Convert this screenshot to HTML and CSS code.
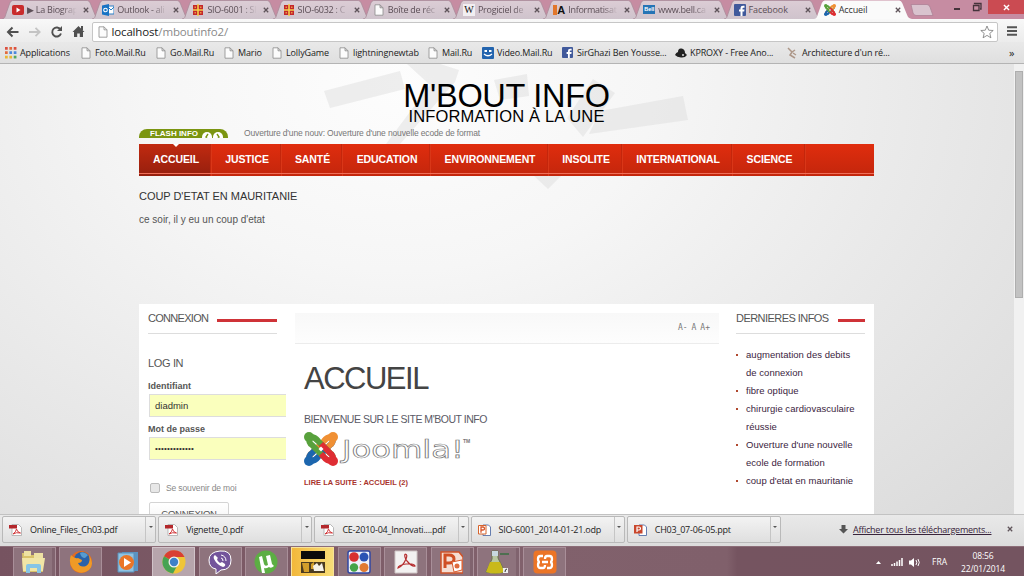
FILE: index.html
```html
<!DOCTYPE html>
<html lang="fr">
<head>
<meta charset="utf-8">
<title>Accueil</title>
<link rel="stylesheet" href="styles.css">
</head>
<body>
<svg class="defs" width="0" height="0">
  <defs>
    <linearGradient id="tabfill" x1="0" y1="0" x2="0" y2="1"><stop offset="0" stop-color="#dccdd5"/><stop offset="1" stop-color="#cfc3cc"/></linearGradient>
    <symbol id="tab" viewBox="0 0 100 19" preserveAspectRatio="none"><path d="M0 19C3 18.500 3 17 4 14L8 3Q9 .5 11 .5H87Q89 .5 90 3L95 15Q96 18.500 100 19" fill="url(#tabfill)" stroke="#a98b9a" stroke-width=".8"/></symbol>
    <symbol id="tabon" viewBox="0 0 100 19" preserveAspectRatio="none"><path d="M0 19C3 18.500 3 17 4 14L8 3Q9 .5 11 .5H87Q89 .5 90 3L95 15Q96 18.500 100 19" fill="#fafafa"/></symbol>
    <symbol id="page" viewBox="0 0 10 12"><path d="M1 .8H6L9 3.800V11.200H1ZM6 .8V3.800H9" fill="#fcfcfc" stroke="#8c8c8c" stroke-width=".8"/></symbol>
    <symbol id="close" viewBox="0 0 6 6"><path d="M.8 .8 5.200 5.200M5.200 .8 .8 5.200" stroke="#5f545a" stroke-width="1.300"/></symbol>
    <symbol id="yt" viewBox="0 0 12 10"><rect width="12" height="10" rx="2" fill="#c92b2c"/><path d="M4.500 2.600 8.500 5 4.500 7.400Z" fill="#fff"/></symbol>
    <symbol id="outlook" viewBox="0 0 12 12"><path d="M6 2H12V10H6Z" fill="#fff" stroke="#2b7fc6"/><path d="M6 3 9 6 12 3" fill="none" stroke="#2b7fc6"/><path d="M0 1.500 7 0V12L0 10.500Z" fill="#1873c4"/><circle cx="3.500" cy="6" r="1.800" fill="none" stroke="#fff" stroke-width="1.100"/></symbol>
    <symbol id="gift" viewBox="0 0 10 12"><path d="M0 1H10V11H0Z" fill="#c4262b"/><path d="M4.200 0H5.800V12H4.200ZM0 5.200H10V6.800H0Z" fill="#f3cf4e"/><path d="M1.500 2.500H3V4H1.500ZM7 2.500H8.500V4H7ZM1.500 8H3V9.500H1.500ZM7 8H8.500V9.500H7Z" fill="#e79a45"/></symbol>
    <symbol id="fb" viewBox="0 0 12 12"><rect width="12" height="12" rx="1" fill="#40599b"/><path d="M6.500 12V7.500H5V5.500H6.500V4Q6.500 1.800 9 1.800H10.500V3.700H9.300Q8.500 3.700 8.500 4.500V5.500H10.500L10.200 7.500H8.500V12Z" fill="#fff"/></symbol>
    <symbol id="joomla" viewBox="0 0 34 34">
      <g fill="none" stroke-width="6" stroke-linejoin="round">
        <path d="M29 5Q29.500 11 26 13L14 25Q11 29.500 5 29" stroke="#1c66ae"/>
        <path d="M29 5Q29.500 11 26 13L22 17" stroke="#f09034"/>
        <path d="M5 29Q4.500 23 8 21L20 9Q23 4.500 29 5" stroke="#f09034"/>
        <path d="M5 29Q4.500 23 8 21L12 17" stroke="#1c66ae"/>
        <path d="M5 5Q4.500 11 8 13L20 25" stroke="#58a13c"/>
        <path d="M29 29Q29.500 23 26 21L14 9Q11 4.500 5 5" stroke="#58a13c"/>
        <path d="M29 29Q29.500 23 26 21L17 12M29 29Q23 29.500 20 25L17 22" stroke="#df2d33"/>
      </g>
      <path d="M17 14.500 19.500 17 17 19.500 14.500 17Z" fill="#fff"/>
      <circle cx="5" cy="5" r="5" fill="#58a13c"/><circle cx="29" cy="5" r="5" fill="#f09034"/><circle cx="29" cy="29" r="5" fill="#df2d33"/><circle cx="5" cy="29" r="5" fill="#1c66ae"/>
    </symbol>
    <symbol id="pdf" viewBox="0 0 13 12"><path d="M3 .5H9.500L12.500 3.500V11.500H3Z" fill="#fff" stroke="#aaa" stroke-width=".8"/><path d="M0 1H8V4.500H0Z" fill="#b3272b"/><path d="M4 10Q7 8 7.500 5Q8 8 11.500 9Q7 8 4 10" fill="none" stroke="#d2373a"/></symbol>
    <symbol id="odp" viewBox="0 0 13 12"><path d="M5 1H10.500L12.500 3V11.500H5Z" fill="#fff" stroke="#5671a8" stroke-width=".9"/><path d="M.5 1.500H8V10H.5Z" fill="#fff" stroke="#d7642c"/><path d="M3 8.800V3H5Q6.500 3 6.500 4.500T5 6H3" fill="none" stroke="#d7562a" stroke-width="1.300"/></symbol>
    <symbol id="ppt" viewBox="0 0 13 12"><path d="M5 1H10.500L12.500 3V11.500H5Z" fill="#fff" stroke="#5671a8" stroke-width=".9"/><path d="M0 1H8.500V9.500H0Z" fill="#c9472c"/><path d="M3 8V3H5Q6.500 3 6.500 4.500T5 6H3" fill="none" stroke="#fff" stroke-width="1.200"/></symbol>
  </defs>
</svg>

<div class="screen">
  <header class="tabstrip">
    <div class="tab"><svg class="shape"><use href="#tab"/></svg><svg class="ico"><use href="#yt"/></svg><span class="label">▶ La Biograp</span><svg class="x"><use href="#close"/></svg></div>
    <div class="tab"><svg class="shape"><use href="#tab"/></svg><svg class="ico"><use href="#outlook"/></svg><span class="label">Outlook - ali</span><svg class="x"><use href="#close"/></svg></div>
    <div class="tab"><svg class="shape"><use href="#tab"/></svg><svg class="ico"><use href="#gift"/></svg><span class="label">SIO-6001 : SI</span><svg class="x"><use href="#close"/></svg></div>
    <div class="tab"><svg class="shape"><use href="#tab"/></svg><svg class="ico"><use href="#gift"/></svg><span class="label">SIO-6032 : C</span><svg class="x"><use href="#close"/></svg></div>
    <div class="tab"><svg class="shape"><use href="#tab"/></svg><svg class="ico"><use href="#page"/></svg><span class="label">Boîte de réc</span><svg class="x"><use href="#close"/></svg></div>
    <div class="tab"><svg class="shape"><use href="#tab"/></svg><span class="ico wiki">W</span><span class="label">Progiciel de</span><svg class="x"><use href="#close"/></svg></div>
    <div class="tab"><svg class="shape"><use href="#tab"/></svg><span class="ico info"><i></i>A</span><span class="label">Informatisat</span><svg class="x"><use href="#close"/></svg></div>
    <div class="tab"><svg class="shape"><use href="#tab"/></svg><span class="ico bell">Bell</span><span class="label">www.bell.ca</span><svg class="x"><use href="#close"/></svg></div>
    <div class="tab"><svg class="shape"><use href="#tab"/></svg><svg class="ico"><use href="#fb"/></svg><span class="label solid">Facebook</span><svg class="x"><use href="#close"/></svg></div>
    <div class="tab active"><svg class="shape"><use href="#tabon"/></svg><svg class="ico"><use href="#joomla"/></svg><span class="label solid">Accueil</span><svg class="x"><use href="#close"/></svg></div>
    <svg class="newtab" viewBox="0 0 24 12"><path d="M1 .5H17Q19 .5 20 3L23 11.500H6Q4 11.500 3 9Z" fill="#d9c3ce" stroke="#ad8296" stroke-width=".8"/></svg>
    <div class="winctl">
      <svg width="60" height="19"><path d="M1 9H7" stroke="#45333b" stroke-width="2"/><path d="M20.500 5.500H26V10.500H20.500ZM21.500 4V3.500H28V9H27" fill="none" stroke="#45333b" stroke-width="1.300"/></svg>
      <div class="winclose"><svg width="7" height="7" viewBox="0 0 6 6"><path d="M.8 .8 5.200 5.200M5.200 .8 .8 5.200" stroke="#fff" stroke-width="1.200"/></svg></div>
    </div>
  </header>

  <div class="toolbar">
    <svg class="navicons" viewBox="0 0 92 23">
      <path d="M18.500 13H9M12.500 8.500 8 13 12.500 17.500" fill="none" stroke="#505050" stroke-width="2"/>
      <path d="M29 13H39M35.500 8.800 39.700 13 35.500 17.200" fill="none" stroke="#c4c4c4" stroke-width="1.800"/>
      <path d="M60.500 10.500A4.500 4.500 0 1 0 61 14.500" fill="none" stroke="#505050" stroke-width="1.900"/><path d="M62 7V12H57Z" fill="#505050"/>
      <path d="M72.500 13 78.500 7 84.500 13H83V18H79.800V14.500H77.200V18H74V13ZM81 7H83V11H81Z" fill="#505050"/>
    </svg>
    <div class="omnibox"><svg class="pg"><use href="#page"/></svg><span class="url"><b>localhost</b>/mboutinfo2/</span>
      <svg class="star" viewBox="0 0 14 14"><path d="M7 1 8.700 5.200 13.200 5.500 9.800 8.400 10.900 12.800 7 10.400 3.100 12.800 4.200 8.400 .8 5.500 5.300 5.200Z" fill="#fff" stroke="#777" stroke-width=".8"/></svg></div>
    <svg class="menu" viewBox="0 0 11 10"><path d="M0 1.200H10M0 5H10M0 8.800H10" stroke="#555" stroke-width="2"/></svg>
  </div>

  <nav class="bookmarks">
    <a><svg class="bi" viewBox="0 0 11 11"><path d="M0 0h2.500v2.500H0zM8 0h2.500v2.500H8z" fill="#dc5040"/><path d="M4 0h2.500v2.500H4zM0 4h2.500v2.500H0z" fill="#e26b3e"/><path d="M4 4h2.500v2.500H4zM8 4h2.500v2.500H8z" fill="#4b88dc"/><path d="M0 8h2.500v2.500H0zM4 8h2.500v2.500H4z" fill="#e8b734"/><path d="M8 8h2.500v2.500H8z" fill="#53a85b"/></svg>Applications</a>
    <a><svg class="bi"><use href="#page"/></svg>Foto.Mail.Ru</a>
    <a><svg class="bi"><use href="#page"/></svg>Go.Mail.Ru</a>
    <a><svg class="bi"><use href="#page"/></svg>Mario</a>
    <a><svg class="bi"><use href="#page"/></svg>LollyGame</a>
    <a><svg class="bi"><use href="#page"/></svg>lightningnewtab</a>
    <a><svg class="bi"><use href="#page"/></svg>Mail.Ru</a>
    <a><svg class="bi" viewBox="0 0 12 12"><rect width="12" height="12" rx="1" fill="#2364ae"/><path d="M2.500 3H5V5H2.500ZM7 3H9.500V5H7Z" fill="#fff"/><path d="M2 7Q6 10.500 10 7" fill="none" stroke="#fff" stroke-width="1.300"/></svg>Video.Mail.Ru</a>
    <a><svg class="bi" viewBox="0 0 12 12"><use href="#fb" width="11" height="11"/></svg>SirGhazi Ben Yousse...</a>
    <a><svg class="bi" viewBox="0 0 12 12"><path d="M3 5Q3 1 6.500 1.500T10 6L12 8Q10 11 6 10.500T0 8Q1 5.500 3 5" fill="#222"/><circle cx="8" cy="8" r="1" fill="#ddd"/></svg>KPROXY - Free Ano...</a>
    <a><svg class="bi" viewBox="0 0 12 12"><path d="M1 1 5 5 8 3M5 5 3 8 8 11M6 6 9 8" fill="none" stroke="#ad9788" stroke-width="1.500"/></svg>Architecture d'un ré...</a>
    <a class="more">»</a>
  </nav>

  <main class="viewport">
    <svg class="shapes" width="1014" height="450" viewBox="0 64 1014 450">
      <g fill="#dadada" fill-opacity=".42">
        <path d="M324 91 400 71 405 89 330 108Z"/>
        <path d="M407 64H440L459 70 455 82 400 144H386L430 85Z"/>
        <path d="M494 80 527 74 529 96 500 100Z"/>
        <path d="M593 79 615 93 583 137 567 118Z"/>
        <path d="M600 111 683 96 688 120 589 134Z"/>
        <path d="M534 176H561L548 189Z"/>
      </g>
    </svg>
    <div class="site">
      <div class="brand"><div class="name">M'BOUT INFO</div><div class="tag">INFORMATION À LA UNE</div></div>
      <div class="flash">
        <div class="pill"><span>FLASH INFO</span><svg width="24" height="9" viewBox="0 0 24 9"><circle cx="6" cy="8" r="5" fill="#fff"/><circle cx="17" cy="8" r="5" fill="#fff"/><path d="M7 5 5 8 7 11M16 5 18 8 16 11" fill="none" stroke="#7b9511" stroke-width="1.400"/></svg></div>
        <span class="ticker">Ouverture d'une nouv: Ouverture d'une nouvelle ecode de format</span>
      </div>
      <nav class="mainnav">
        <a class="on">ACCUEIL</a><a>JUSTICE</a><a>SANTÉ</a><a>EDUCATION</a><a>ENVIRONNEMENT</a><a>INSOLITE</a><a>INTERNATIONAL</a><a>SCIENCE</a><span></span>
      </nav>
      <section class="headline"><h3>COUP D'ETAT EN MAURITANIE</h3><p>ce soir, il y eu un coup d'etat</p></section>
      <div class="content">
        <aside class="left">
          <div class="modhead"><h3>CONNEXION</h3><i></i></div>
          <h3 class="login">LOG IN</h3>
          <label>Identifiant</label>
          <div class="field">diadmin</div>
          <label>Mot de passe</label>
          <div class="field pw">•••••••••••••</div>
          <div class="remember"><i></i>Se souvenir de moi</div>
          <div class="btn">CONNEXION</div>
        </aside>
        <article class="mid">
          <div class="tools"><span>A-</span><span>A</span><span>A+</span></div>
          <h1>ACCUEIL</h1>
          <h2>BIENVENUE SUR LE SITE M'BOUT INFO</h2>
          <div class="logo"><svg width="34" height="34"><use href="#joomla"/></svg>
            <svg width="134" height="34"><text x="4" y="26" textLength="122" lengthAdjust="spacingAndGlyphs" class="wordmark">Joomla!</text><text x="125" y="11" class="tm">TM</text></svg></div>
          <div class="readmore">LIRE LA SUITE : ACCUEIL (2)</div>
        </article>
        <aside class="right">
          <div class="modhead"><h3>DERNIERES INFOS</h3><i></i></div>
          <ul>
            <li>augmentation des debits<br>de connexion</li>
            <li>fibre optique</li>
            <li>chirurgie cardiovasculaire<br>réussie</li>
            <li>Ouverture d'une nouvelle<br>ecole de formation</li>
            <li>coup d'etat en mauritanie</li>
          </ul>
        </aside>
      </div>
    </div>
    <div class="scroll"><div class="thumb"></div></div>
  </main>

  <div class="downloads">
    <div class="dl"><svg><use href="#pdf"/></svg><span>Online_Files_Ch03.pdf</span><i></i></div>
    <div class="dl"><svg><use href="#pdf"/></svg><span>Vignette_0.pdf</span><i></i></div>
    <div class="dl"><svg><use href="#pdf"/></svg><span>CE-2010-04_Innovati....pdf</span><i></i></div>
    <div class="dl"><svg><use href="#odp"/></svg><span>SIO-6001_2014-01-21.odp</span><i></i></div>
    <div class="dl"><svg><use href="#ppt"/></svg><span>CH03_07-06-05.ppt</span><i></i></div>
    <div class="all"><svg width="9" height="9" viewBox="0 0 9 9"><path d="M2.500 0H6.500V4H9L4.500 8.500 0 4H2.500Z" fill="#555"/></svg><a>Afficher tous les téléchargements...</a></div>
    <svg class="dlx"><use href="#close"/></svg>
  </div>

  <footer class="taskbar">
    <div class="apps">
      <div class="app stack"><svg viewBox="0 0 24 24"><path d="M1 3H8L10 5H22V22H2Z" fill="#d9c26b"/><path d="M3 1H10V6H3ZM13 3H22V8H13Z" fill="#eee2a3"/><path d="M1 8H24L22 21H2Z" fill="#f1e5a6"/><path d="M5 23V16Q5 14 7 14H18Q20 14 20 16V23H16V18H9V23Z" fill="#86c5e6"/></svg></div>
      <div class="app"><svg viewBox="0 0 24 24"><circle cx="12" cy="12" r="11" fill="#e36b20"/><circle cx="13" cy="10" r="8" fill="#2a62a8"/><path d="M2 5Q5 9 9 8L13 10Q13 13 9 13 11 18 17 16 22 13 20 5 26 14 20 20 12 26 4 19 -1 13 2 5" fill="#ef9a27"/><path d="M11 3Q15 1 19 5L16 8Q12 8 11 3" fill="#579bd0"/></svg></div>
      <div class="app plain"><svg viewBox="0 0 24 24"><path d="M7 2H23V21H9Z" fill="#5b93c2"/><path d="M3 3H19V22H3Z" fill="#8fc2e2" stroke="#5b91bb"/><circle cx="11.500" cy="12.500" r="7.500" fill="#ea7527"/><path d="M9 8 16 12.500 9 17Z" fill="#fff"/></svg></div>
      <div class="app lit"><svg viewBox="0 0 24 24"><circle cx="12" cy="12" r="11.500" fill="#efc537"/><path d="M12 12 2 6.200A11.500 11.500 0 0 1 22.500 7H12Z" fill="#d93f32"/><path d="M12 12 2 6.200A11.500 11.500 0 0 0 11 23.500L16 14Z" fill="#47a353"/><circle cx="12" cy="12" r="5.500" fill="#f3f1ec"/><circle cx="12" cy="12" r="4.200" fill="#3d80c8"/></svg></div>
      <div class="app"><svg viewBox="0 0 24 24"><path d="M12 1Q23 0 23 10T13 20L8 24V19Q1 18 1 10T12 1" fill="#73549b" stroke="#fff"/><path d="M7 5Q5 6 6 9 9 15 15 17 18 16 17 14L14 12 12 13Q9 11 9 9L10 8Z" fill="#fff"/><path d="M13 5Q18 6 18 11M13 8Q15 8 15 11" fill="none" stroke="#fff"/></svg></div>
      <div class="app"><svg viewBox="0 0 24 24"><circle cx="12" cy="12" r="11.500" fill="#5cae43"/><path d="M5 7 8 6 10 14Q11 17 14 15L12 6 16 5 18 14 20 16Q17 19 15 17 12 19 10 18L11 23H8Z" fill="#fff"/></svg></div>
      <div class="app hot"><svg viewBox="0 0 24 24"><path d="M0 1H24V9H0Z" fill="#0b0b0b"/><path d="M0 12H24V23H0Z" fill="#4c3c20"/><path d="M1 13H8V22H3ZM10 14 13 12V19H10Z" fill="#d29e2b"/><path d="M12 16 16 13 18 16 21 13 23 21H13Z" fill="#f5f2e9"/></svg></div>
      <div class="app"><svg viewBox="0 0 24 24"><rect x="1" y="1" width="22" height="22" rx="2" fill="#eef1fa" stroke="#3147a2" stroke-width="1.500"/><circle cx="7" cy="7" r="4.800" fill="#d83032"/><circle cx="17" cy="7" r="4.500" fill="#2a52b4"/><circle cx="7" cy="17.500" r="4.200" fill="#45a449"/><circle cx="17" cy="17.500" r="4.500" fill="#e07a32"/></svg></div>
      <div class="app"><svg viewBox="0 0 24 24"><path d="M1 1H23V23H1Z" fill="#f3f1f1" stroke="#cfc5c5"/><path d="M11 4Q14 4 12 9 9 16 4 18 4 15 12 14 20 13 21 16 18 17 13 11 10 7 11 4" fill="none" stroke="#b52c2e" stroke-width="1.200"/></svg></div>
      <div class="app stack"><svg viewBox="0 0 24 24"><path d="M2 2H20L24 7V23H2Z" fill="#f5ded3" stroke="#cf5329" stroke-width="1.500"/><path d="M6 18V5H10Q15 5 15 9T10 13H6" fill="none" stroke="#d04f24" stroke-width="3"/><path d="M13 12 23 10V20L15 22Z" fill="#fff" stroke="#d85a2d"/><circle cx="18" cy="16" r="2.500" fill="#df6b3d"/></svg></div>
      <div class="app stack"><svg viewBox="0 0 24 24"><path d="M7 1H13V8L20 22Q10 25 1 22L7 9Z" fill="#b9c7a0" stroke="#68724e"/><path d="M5 12H15L19 22Q10 25 1 22Z" fill="#c9b91a"/><path d="M7 1H13V6H7Z" fill="#c8d8df"/><path d="M15 4H24" stroke="#4e6f50" stroke-width="2"/><path d="M18 18H23V23H18Z" fill="#eee"/><path d="M20 22Q20 19 22 19" fill="none" stroke="#333"/></svg></div>
      <div class="app"><svg viewBox="0 0 24 24"><rect x=".5" y=".5" width="23" height="23" rx="4" fill="#ec7526"/><path d="M10 6H7.500Q5 6 5 9T7 12Q5 12 5 15T7.500 18H10Q12 18 12 15M14 18H16.500Q19 18 19 15T17 12Q19 12 19 9T16.500 6H14Q12 6 12 9M9 12H15" fill="none" stroke="#fff" stroke-width="2.300"/></svg></div>
    </div>
    <div class="tray">
      <svg width="50" height="14" viewBox="0 0 50 14"><path d="M0 9 2.500 6 5 9Z" fill="#fff"/><path d="M16 11V9M18.500 11V8M21 11V6.500M23.500 11V5M26 11V3" stroke="#fff" stroke-width="1.500"/><path d="M33 5.500H35L38 3V12L35 9.500H33Z" fill="#fff"/><path d="M40 5Q41.500 7.500 40 10M42 4Q44.500 7.500 42 11" fill="none" stroke="#fff"/></svg>
      <span class="lang">FRA</span>
      <div class="clock">08:56<br>22/01/2014</div>
    </div>
  </footer>
</div>
</body>
</html>
```
FILE: styles.css
```css
* { box-sizing: border-box; }
body { margin: 0; overflow: hidden; }
.defs { position: absolute; }
h1, h2, h3, p, ul { margin: 0; padding: 0; font-weight: normal; }
.screen { width: 1024px; height: 576px; display: flex; flex-direction: column; overflow: hidden; font-family: "Open Sans", "Noto Sans", sans-serif; font-size: 9px; color: #222; }
.screen > * { flex: none; }

.tabstrip { height: 19px; background: #c68ca2; display: flex; padding-left: 2px; }
.tab { position: relative; width: 90.2px; height: 19px; display: flex; align-items: center; padding-left: 10px; white-space: nowrap; color: #5c4f57; }
.shape { position: absolute; left: 0; top: 0; width: 98px; height: 19px; }
.tab .ico { position: relative; width: 12px; height: 12px; margin-right: 3px; flex: none; }
.tab .label { position: relative; width: 54px; margin-right: 2px; letter-spacing: -.25px; -webkit-mask-image: linear-gradient(90deg, #000 65%, transparent 92%); mask-image: linear-gradient(90deg, #000 65%, transparent 92%); }
.tab .x { position: relative; width: 6px; height: 6px; flex: none; }
.tab.active { color: #333; }
.tab .label.solid { -webkit-mask-image: none; mask-image: none; letter-spacing: -.1px; }
.wiki { background: #f2eef1; font: 10px/12px "Liberation Serif", serif; text-align: center; color: #111; }
.info { display: flex; font: bold 11px/12px "Liberation Sans", sans-serif; color: #111; }
.info i { width: 4px; height: 10px; background: #e2762b; margin-top: 1px; }
.tab .bell { height: 9px; background: #2674b5; color: #fff; font: bold 5.5px/9px "Liberation Sans", sans-serif; text-align: center; }
.newtab { width: 24px; height: 12px; margin: 4px 0 0 6px; flex: none; }
.winctl { display: flex; margin-left: auto; width: 71px; }
.winctl > svg { width: 35px; flex: none; }
.winclose { width: 36px; height: 14px; background: #cb4b52; display: flex; align-items: center; justify-content: center; }

.toolbar { height: 23px; background: linear-gradient(#f8f8f8, #ececec); display: flex; align-items: center; }
.navicons { width: 92px; height: 23px; flex: none; }
.omnibox { width: 906px; height: 20px; margin-top: 2px; background: #fff; border: 1px solid #c6c6c6; border-radius: 2px; display: flex; align-items: center; padding: 0 3px 0 5px; }
.pg { width: 10px; height: 12px; }
.url { margin-left: 3.5px; font-size: 11.5px; letter-spacing: -.15px; color: #8a8a8a; }
.url b { font-weight: normal; color: #222; }
.star { width: 14px; height: 14px; margin-left: auto; }
.menu { width: 11px; height: 10px; margin-left: 9px; }

.bookmarks { height: 22px; background: linear-gradient(#e9e9e9, #dfdfdf); border-bottom: 1px solid #b4b4b4; padding-left: 5px; display: grid; grid-template-columns: 75px 75px 68px 48px 67px 89px 55px 80px 113px 112px 222px 1fr; align-items: center; letter-spacing: -.12px; }
.bookmarks a { display: flex; align-items: center; white-space: nowrap; gap: 3px; }
.bi { width: 12px; height: 12px; flex: none; }
.more { font-size: 11px; }

.viewport { position: relative; height: 450px; overflow: hidden; display: flex; justify-content: space-between; padding-left: 139px; background: radial-gradient(ellipse 850px 620px at 400px 20px, #fdfdfd 0%, #f6f6f6 30%, #e9e9e9 62%, #dadada 100%); font-family: "Liberation Sans", Arial, sans-serif; }
.shapes { position: absolute; left: 0; top: 0; }
.site { position: relative; width: 735px; height: 450px; }
.brand { height: 64px; text-align: center; color: #000; padding-top: 19px; }
.name { font-size: 32.5px; line-height: 26px; height: 24px; letter-spacing: -.3px; }
.tag { font-size: 16.5px; line-height: 18px; letter-spacing: .15px; }
.flash { height: 16px; display: flex; }
.pill { width: 89px; height: 9px; margin-top: 1px; background: #7b9511; border-radius: 8px 8px 0 0; overflow: hidden; display: flex; justify-content: space-between; padding: 0 3px 0 11px; color: #fff; font: bold 8px/9px "Liberation Sans", sans-serif; white-space: nowrap; }
.ticker { margin-left: 16px; font-size: 8.5px; line-height: 11px; color: #777; letter-spacing: -.14px; }
.mainnav { position: relative; height: 32px; display: grid; grid-template-columns: 72px 70px 61px 88px 118px 74px 110px 73px 1fr; background: linear-gradient(#e02d0e, #c3260c); color: #fff; font: bold 10.5px/31px "Liberation Sans", sans-serif; letter-spacing: -.1px; }
.mainnav::after { content: ""; position: absolute; left: 0; right: 0; bottom: 2px; height: 1px; background: #f0705a; }
.mainnav a { text-align: center; padding-left: 3px; border-right: 1px solid #c4260c; box-shadow: 1px 0 #d93718; white-space: nowrap; }
.mainnav .on { position: relative; background: linear-gradient(#c12a10, #951f0e); }
.on::before { content: ""; position: absolute; left: 34px; top: 0; border: solid transparent; border-width: 3px 3px 0; border-top-color: #fff; }
.headline { height: 128px; padding-top: 13px; }
.headline h3 { font-size: 11px; line-height: 14px; color: #333; white-space: nowrap; letter-spacing: -.04px; }
.headline p { margin-top: 10px; font-size: 10px; line-height: 14px; color: #555; }
.content { height: 210px; background: #fff; display: flex; overflow: hidden; }
.left { width: 147px; padding: 0 0 0 9px; }
.modhead { display: flex; height: 30px; border-bottom: 1px solid #ddd; padding-top: 8px; }
.modhead h3 { font-size: 11px; line-height: 13px; color: #555; white-space: nowrap; letter-spacing: -.7px; }
.modhead i { flex: 1; height: 3px; background: #cf3338; margin: 7px 0 0 9px; }
.left .modhead { width: 129px; }
.right .modhead h3 { letter-spacing: -.55px; }
.login { font-size: 11px; line-height: 14px; margin: 22px 0 9px; color: #555; letter-spacing: -.35px; }
label { display: block; font: bold 9px/14px "Liberation Sans", sans-serif; color: #555; }
.field { height: 23px; margin: 1px 0 5px 1px; background: #faffbd; border: 1px solid #ddd; border-right: 0; font-size: 9.5px; line-height: 21px; padding-left: 5px; color: #333; }
.pw { font-size: 8px; letter-spacing: .2px; }
.remember { display: flex; align-items: center; margin: 21px 0 0 2px; height: 14px; font-size: 8.5px; color: #888; gap: 6px; letter-spacing: -.13px; }
.remember i { width: 10px; height: 10px; border: 1px solid #bbb; border-radius: 2px; background: #e7e7e7; }
.btn { margin: 7px 0 0 1px; width: 80px; height: 26px; border: 1px solid #d4d4d4; border-radius: 2px; text-align: center; font-size: 9.5px; line-height: 22px; color: #555; background: linear-gradient(#fff, #f2f2f2); letter-spacing: -.25px; }
.mid { width: 433px; padding: 9px 0 0 9px; }
.tools { height: 31px; background: linear-gradient(#f8f8f8, #fdfdfd); border-bottom: 1px solid #ececec; display: flex; justify-content: flex-end; gap: 4px; padding-right: 9px; font: 8px/29px "DejaVu Sans Mono", monospace; color: #777; width: 424px; }
h1 { font-size: 31px; line-height: 36px; margin: 17px 0 0 9px; color: #444; letter-spacing: -1.5px; }
h2 { font-size: 10.5px; line-height: 14px; margin: 15px 0 0 9px; color: #5a5a66; white-space: nowrap; letter-spacing: -.47px; }
.logo { display: flex; height: 34px; margin: 6px 0 0 9px; }
.wordmark { font: 24px "DejaVu Sans", sans-serif; fill: #fff; stroke: #777; stroke-width: .7px; }
.tm { font: bold 5px "Liberation Sans", sans-serif; fill: #777; }
.readmore { margin: 11px 0 0 9px; font: bold 7.5px/12px "Liberation Sans", sans-serif; color: #a8332c; }
.right { width: 146px; padding-left: 17px; }
.right .modhead { width: 129px; }
.right ul { list-style: none; margin-top: 12px; font-size: 9.5px; line-height: 18px; color: #3b2440; letter-spacing: .03px; }
.right li { position: relative; padding-left: 10px; white-space: nowrap; }
.right li::before { content: ""; position: absolute; left: 0; top: 8px; width: 2px; height: 2px; background: #b0492f; }
.scroll { width: 10px; background: #f1f1f1; padding: 7px 1px 0; position: relative; }
.thumb { height: 227px; background: #c2c2c2; border: 1px solid #aeaeae; }

.downloads { height: 32px; border-top: 1px solid #c2c2c2; background: linear-gradient(#e9e9e9, #dcdcdc); display: flex; gap: 2px; padding: 1px 0 3px 2px; }
.dl { display: flex; align-items: center; width: 154.2px; height: 27px; flex: none; border: 1px solid #b9b9b9; border-radius: 2px; background: linear-gradient(#f3f3f3, #dfdfdf); white-space: nowrap; letter-spacing: -.22px; }
.dl svg { width: 13px; height: 12px; margin: 0 8px 0 6px; flex: none; }
.dl i { margin-left: auto; width: 10px; height: 25px; border-left: 1px solid #c5c5c5; display: flex; justify-content: center; padding-top: 9px; }
.dl i::before { content: ""; width: 0; height: 0; border: 2px solid transparent; border-top-color: #555; }
.all { margin-left: 56px; display: flex; align-items: center; gap: 5px; white-space: nowrap; flex: none; letter-spacing: -.24px; }
.all a { text-decoration: underline; width: 140px; color: #38233a; }
.dlx { width: 6px; height: 6px; margin: 10px 0 0 12px; flex: none; }

.taskbar { height: 30px; background: linear-gradient(90deg, #765360, #81616c 50%, #80606b 71%, #755460 72%, #745460); border-top: 1px solid #8c6d78; display: flex; justify-content: space-between; }
.apps { display: flex; gap: 3.4px; padding-left: 13px; }
.app { width: 43px; height: 30px; border: 1px solid #a98f99; border-bottom: 0; background: #8e737d; display: flex; justify-content: center; padding-top: 2px; }
.app svg { width: 24px; height: 24px; }
.stack { box-shadow: inset -3px 0 #80636e; }
.stack svg { margin-right: 3px; }
.plain { background: none; border-color: transparent; }
.lit { background: #b7a5ac; border-color: #d1c3c9; }
.hot { background: linear-gradient(90deg, #f2b73a, #f8dd78); border-color: #f8e39a; }
.tray { display: flex; align-items: center; color: #fff; font-size: 8.5px; width: 148px; }
.tray > svg { flex: none; }
.lang { margin-left: 6px; width: 24px; }
.clock { margin-left: 2px; text-align: center; line-height: 13px; width: 50px; letter-spacing: -.1px; }
```
